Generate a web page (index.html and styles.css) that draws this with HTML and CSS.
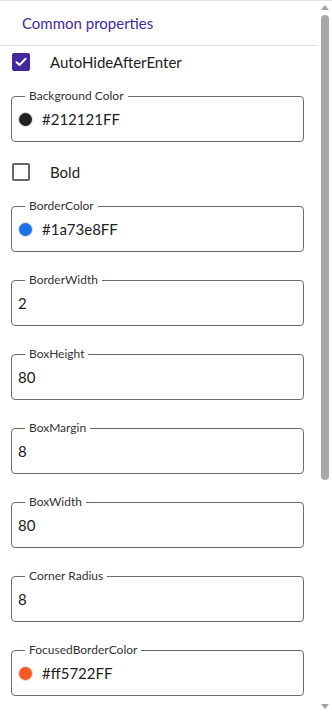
FILE: index.html
```html
<!DOCTYPE html>
<html>
<head>
<meta charset="utf-8">
<link rel="stylesheet" href="styles.css">
</head>
<body>
<div class="frame">
  <div class="main">
    <div class="header">Common properties</div>
    <div class="list">
      <label class="check-row">
        <span class="box checked">
          <svg width="12" height="10" viewBox="0 0 12 10"><path d="M1.5 5.2 L4.5 8 L10.5 1.8" fill="none" stroke="#fff" stroke-width="2" stroke-linecap="round" stroke-linejoin="round"/></svg>
        </span>
        <span class="check-label">AutoHideAfterEnter</span>
      </label>
      <fieldset class="field">
        <legend>Background Color</legend>
        <div class="value"><span class="swatch" style="background:#212121"></span>#212121FF</div>
      </fieldset>
      <label class="check-row">
        <span class="box"></span>
        <span class="check-label">Bold</span>
      </label>
      <fieldset class="field">
        <legend>BorderColor</legend>
        <div class="value"><span class="swatch" style="background:#1a73e8"></span>#1a73e8FF</div>
      </fieldset>
      <fieldset class="field">
        <legend>BorderWidth</legend>
        <div class="value num">2</div>
      </fieldset>
      <fieldset class="field">
        <legend>BoxHeight</legend>
        <div class="value num">80</div>
      </fieldset>
      <fieldset class="field">
        <legend>BoxMargin</legend>
        <div class="value num">8</div>
      </fieldset>
      <fieldset class="field">
        <legend>BoxWidth</legend>
        <div class="value num">80</div>
      </fieldset>
      <fieldset class="field">
        <legend>Corner Radius</legend>
        <div class="value num">8</div>
      </fieldset>
      <fieldset class="field">
        <legend>FocusedBorderColor</legend>
        <div class="value"><span class="swatch" style="background:#ff5722"></span>#ff5722FF</div>
      </fieldset>
    </div>
  </div>
  <div class="scrollbar">
    <span class="arrow up"></span>
    <span class="thumb"></span>
    <span class="spacer"></span>
    <span class="arrow down"></span>
  </div>
</div>
</body>
</html>
```
FILE: styles.css
```css
html, body {
  margin: 0;
  padding: 0;
  background: #fff;
}
body {
  font-family: Lato, "Noto Sans", sans-serif;
  color: #212121;
}
.frame {
  display: flex;
  height: 712px;
  box-sizing: border-box;
  border-top: 1px solid #e2e2e2;
  overflow: hidden;
}
.main {
  flex: 1;
  min-width: 0;
  overflow: hidden;
}
.header {
  height: 44px;
  display: flex;
  align-items: center;
  padding-left: 22px;
  font-size: 15px;
  color: #4527a0;
  border-bottom: 1px solid #e0e0e0;
}
.list {
  display: flex;
  flex-direction: column;
  gap: 11px;
  padding: 0 14px 0 11px;
}
.check-row {
  height: 32px;
  display: flex;
  align-items: center;
  padding-left: 1px;
}
.box {
  width: 18px;
  height: 18px;
  box-sizing: border-box;
  border: 2px solid #666;
  border-radius: 2px;
  display: flex;
  align-items: center;
  justify-content: center;
}
.box.checked {
  background: #4527a0;
  border-color: #4527a0;
}
.check-label {
  margin-left: 20px;
  font-size: 15px;
  color: #212121;
}
.field {
  margin: 0;
  padding: 0 7px 6px;
  border: 1px solid #6b6b6b;
  border-radius: 4px;
  min-width: 0;
}
.field + .field {
  margin-top: 10px;
}
.check-row + .field {
  margin-top: 0;
}
.field + .check-row {
  margin-top: 3px;
}
.field legend {
  margin-left: 6px;
  padding: 0 4px;
  font-size: 12px;
  line-height: 14px;
  color: #333;
}
.value {
  height: 32px;
  display: flex;
  align-items: center;
  font-size: 15px;
  color: #212121;
}
.value.num {
  margin-left: -1px;
}
.swatch {
  width: 13px;
  height: 13px;
  border-radius: 50%;
  margin-right: 10px;
  box-shadow: 0 0 0 1px #dcdcdc;
}
.scrollbar {
  width: 14px;
  flex: none;
  display: flex;
  flex-direction: column;
  align-items: center;
  padding: 4px 0 3px;
  box-sizing: border-box;
}
.arrow {
  width: 0;
  height: 0;
  border-left: 4px solid transparent;
  border-right: 4px solid transparent;
}
.arrow.up {
  border-bottom: 5px solid #a3a3a3;
}
.arrow.down {
  border-top: 5px solid #a3a3a3;
}
.thumb {
  margin-top: 5px;
  width: 8px;
  height: 465px;
  border-radius: 4px;
  background: #a8a8a8;
}
.spacer {
  flex: 1;
}
```
